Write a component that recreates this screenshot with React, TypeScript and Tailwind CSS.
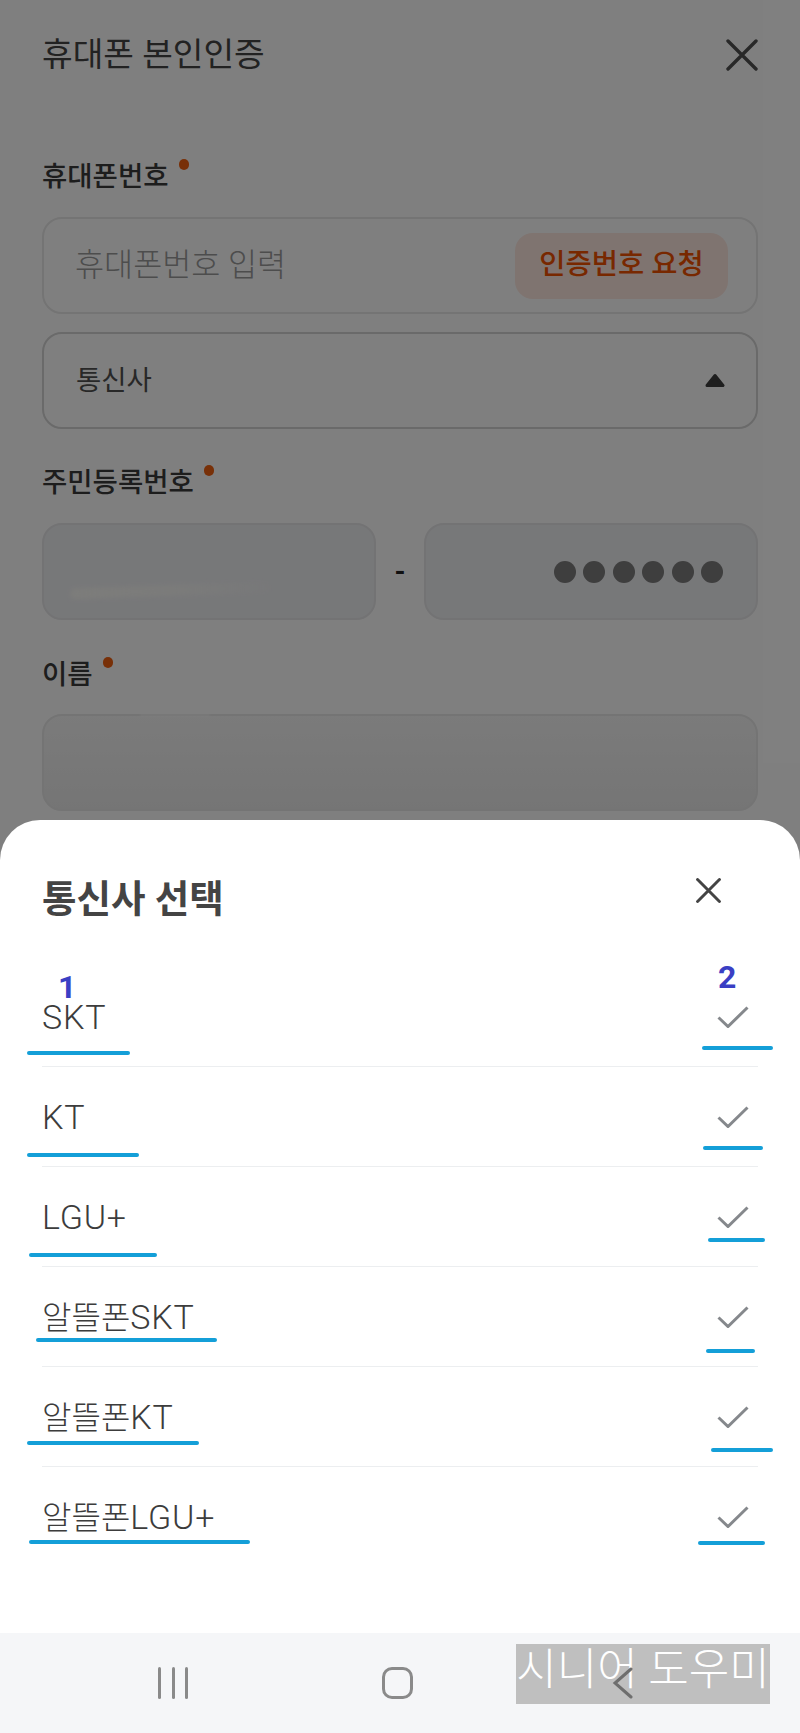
const carriers = [
  { id: 'skt', prefix: '', name: 'SKT' },
  { id: 'kt', prefix: '', name: 'KT' },
  { id: 'lgu', prefix: '', name: 'LGU+' },
  { id: 'mvno-skt', prefix: '알뜰폰', name: 'SKT' },
  { id: 'mvno-kt', prefix: '알뜰폰', name: 'KT' },
  { id: 'mvno-lgu', prefix: '알뜰폰', name: 'LGU+' },
];

// hand drawn blue underlines on top of the screenshot
const marks = [
  { left: 27, top: 1051, width: 103 },
  { left: 702, top: 1046, width: 71 },
  { left: 27, top: 1153, width: 112 },
  { left: 703, top: 1146, width: 60 },
  { left: 29, top: 1253, width: 128 },
  { left: 708, top: 1238, width: 57 },
  { left: 36, top: 1338, width: 181 },
  { left: 706, top: 1349, width: 49 },
  { left: 27, top: 1441, width: 172 },
  { left: 711, top: 1448, width: 62 },
  { left: 29, top: 1540, width: 221 },
  { left: 698, top: 1541, width: 67 },
];

const Label = ({ children }: { children: string }) => (
  <div className="flex h-[34px] items-center">
    <span className="mt-[2px] text-[27.5px] font-medium leading-none text-[#3a3a3a]">{children}</span>
    <span className="mb-[23px] ml-[10px] h-[11px] w-[10px] rounded-full bg-[#f06010]" />
  </div>
);

const CloseIcon = ({
  size,
  stroke,
  className,
}: {
  size: number;
  stroke: string;
  className: string;
}) => (
  <svg
    width={size}
    height={size}
    viewBox="0 0 32 32"
    fill="none"
    stroke="currentColor"
    strokeWidth={stroke}
    strokeLinecap="round"
    className={className}
  >
    <path d="M2 2 L30 30 M30 2 L2 30" />
  </svg>
);

const App = () => {
  return (
    <div className="relative h-[1733px] w-[800px] overflow-hidden bg-white font-['Roboto','Noto_Sans_CJK_KR',sans-serif]">
      <div className="px-[42px]">
        <header className="flex h-[110px] items-center justify-between">
          <h1 className="text-[33.3px] font-normal text-[#454545]">휴대폰 본인인증</h1>
          <CloseIcon size={32} stroke="3.4" className="text-[#505050]" />
        </header>

        <div className="mt-[49px]">
          <Label>휴대폰번호</Label>
          <div className="mt-[24px] flex h-[97px] items-center justify-between rounded-[20px] border-2 border-[#e8e8e8] pl-[31px] pr-[28px]">
            <span className="text-[31.6px] font-light text-[#9a9a9a]">휴대폰번호 입력</span>
            <button
              type="button"
              className="flex h-[66px] w-[213px] items-center justify-center rounded-[18px] bg-[#ffe8e0] text-[28.5px] font-medium text-[#f05000]"
            >
              인증번호 요청
            </button>
          </div>
          <div className="mt-[18px] flex h-[97px] items-center justify-between rounded-[20px] border-2 border-[#d4d4d4] pl-[32px] pr-[31px]">
            <span className="text-[27.5px] text-[#505050]">통신사</span>
            <svg width="20" height="15" viewBox="0 0 20 15" className="text-[#3e3e3e]">
              <path
                d="M10 2.5 L18 12.5 H2 Z"
                fill="currentColor"
                stroke="currentColor"
                strokeWidth="3"
                strokeLinejoin="round"
              />
            </svg>
          </div>
        </div>

        <div className="mt-[36px]">
          <Label>주민등록번호</Label>
          <div className="mt-[24px] flex items-center justify-between">
            <div className="relative h-[97px] w-[334px] overflow-hidden rounded-[20px] border-2 border-[#e6e6e8] bg-[#eff0f3]">
              <div className="absolute left-[26px] top-[60px] h-[11px] w-[200px] -rotate-2 rounded-full bg-gradient-to-r from-[#fafaf6] via-[#fafaf6]/70 to-[#fafaf6]/10 blur-[2px]" />
            </div>
            <span className="w-[12px] text-center text-[28px] font-bold leading-none text-[#222222]">-</span>
            <div className="flex h-[97px] w-[334px] items-center justify-end gap-[7.5px] rounded-[20px] border-2 border-[#e6e6e8] bg-[#eff0f3] pr-[33px]">
              {[0, 1, 2, 3, 4, 5].map(n => (
                <span key={n} className="h-[22px] w-[22px] rounded-full bg-[#7c7c7c]" />
              ))}
            </div>
          </div>
        </div>

        <div className="mt-[37px]">
          <Label>이름</Label>
          <div className="relative mt-[23px] h-[97px] rounded-[20px] border-2 border-[#e8e8e8] bg-gradient-to-b from-[#f6f6f6] to-[#ebebeb]">
            <div className="absolute left-[96px] top-[-2px] h-[2px] w-[70px] rounded-full bg-white opacity-70 blur-[1px]" />
          </div>
        </div>
      </div>

      <div className="absolute inset-0 bg-black/50" />

      <div className="absolute inset-x-0 bottom-0 flex h-[913px] flex-col rounded-t-[40px] bg-white">
        <div className="flex h-[147px] items-start justify-between pl-[42px] pr-[79px]">
          <h2 className="mt-[57px] text-[37.5px] font-bold leading-[44px] text-[#444444]">통신사 선택</h2>
          <CloseIcon size={25} stroke="3.8" className="mt-[58px] text-[#444444]" />
        </div>

        <ul className="flex-1 px-[42px]">
          {carriers.map((item, index) => (
            <li
              key={item.id}
              className={`flex h-[100px] items-center justify-between ${
                index === carriers.length - 1 ? '' : 'border-b border-[#eceef0]'
              }`}
            >
              <span className="text-[34px] font-light leading-none tracking-[0.8px] text-[#3c3c3c]">
                {item.prefix && <span className="text-[32px] tracking-normal">{item.prefix}</span>}
                {item.name}
              </span>
              <svg width="32" height="22" viewBox="0 0 32 22" fill="none" className="mr-[9px] text-[#85888c]">
                <path d="M1.5 11.5 L11 20.5 L30.5 1.5" stroke="currentColor" strokeWidth="3" />
              </svg>
            </li>
          ))}
        </ul>

        <nav className="flex h-[100px] items-start bg-[#f5f6f8] pt-[34px]">
          <div className="ml-[158px] flex h-[32px] w-[30px] justify-between">
            <span className="w-[3px] rounded-full bg-[#8a8a8a]" />
            <span className="w-[3px] rounded-full bg-[#8a8a8a]" />
            <span className="w-[3px] rounded-full bg-[#8a8a8a]" />
          </div>
          <div className="ml-[194px] h-[32px] w-[31px] rounded-[10px] border-[3px] border-[#8a8a8a]" />
          <svg width="21" height="32" viewBox="0 0 21 32" fill="none" className="relative z-10 ml-[199px] text-[#6e6e6e]">
            <path d="M19 2 L3 16 L19 30" stroke="currentColor" strokeWidth="3" strokeLinecap="round" />
          </svg>
        </nav>
      </div>

      <div className="absolute left-[516px] top-[1644px] flex h-[60px] w-[254px] items-center justify-center bg-[#bfbfbf] pb-[8px] text-[44px] font-light leading-none text-white">
        시니어 도우미
      </div>

      <span className="absolute left-[58px] top-[975px] text-[32px] font-bold leading-[24px] text-[#3a3fc4]">1</span>
      <span className="absolute left-[718px] top-[965px] text-[32px] font-bold leading-[24px] text-[#3a3fc4]">2</span>

      {marks.map(mark => (
        <div
          key={`${mark.left}-${mark.top}`}
          className="absolute h-[4px] rounded-full bg-[#149fd8]"
          style={{ left: mark.left, top: mark.top, width: mark.width }}
        />
      ))}
    </div>
  );
};

export default App;
